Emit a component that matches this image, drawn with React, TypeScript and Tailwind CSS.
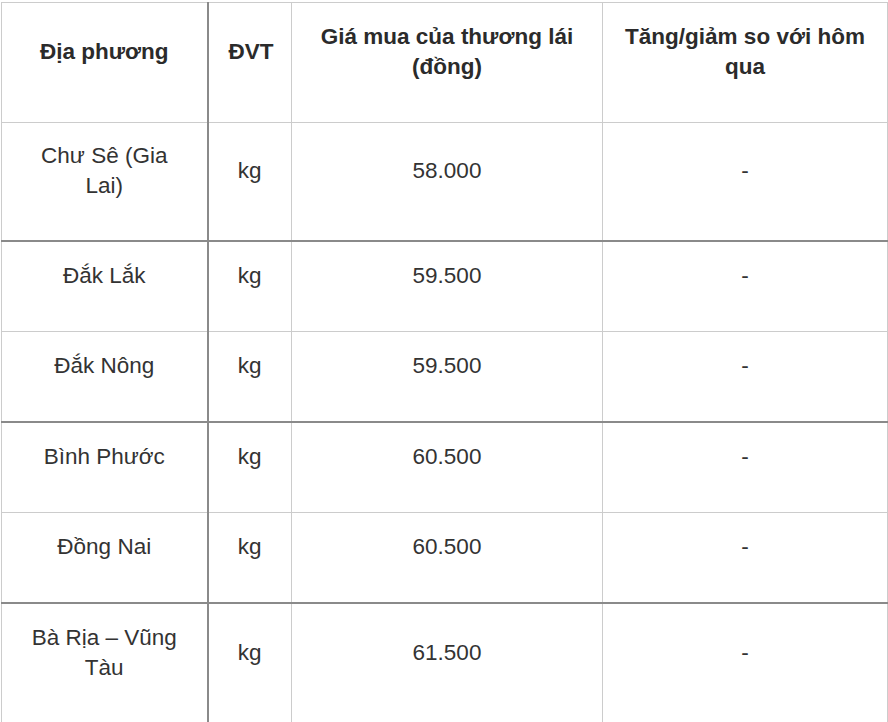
type Row = {
  place: string;
  unit: string;
  price: string;
  change: string;
  /** Darker divider under this row. */
  strong?: boolean;
};

const rows: Row[] = [
  { place: 'Chư Sê (Gia Lai)', unit: 'kg', price: '58.000', change: '-', strong: true },
  { place: 'Đắk Lắk', unit: 'kg', price: '59.500', change: '-' },
  { place: 'Đắk Nông', unit: 'kg', price: '59.500', change: '-', strong: true },
  { place: 'Bình Phước', unit: 'kg', price: '60.500', change: '-' },
  { place: 'Đồng Nai', unit: 'kg', price: '60.500', change: '-', strong: true },
  { place: 'Bà Rịa – Vũng Tàu', unit: 'kg', price: '61.500', change: '-' },
];

const base =
  'border border-[#cccccc] px-[20px] text-center align-middle leading-[30px]';

export default function App() {
  return (
    <div
      className="min-h-screen bg-white pl-[1px] pt-[2px] text-[#333333]"
      style={{ fontFamily: '"Liberation Sans", Arial, sans-serif' }}
    >
      <table className="w-[886px] table-fixed border-collapse text-[22.5px]">
        <colgroup>
          <col className="w-[206px]" />
          <col className="w-[84px]" />
          <col className="w-[311px]" />
          <col className="w-[285px]" />
        </colgroup>
        <thead>
          <tr className="font-bold text-[#2b2b2b]">
            <th className={`${base} pt-[19px] pb-[40px] border-r-2 border-r-[#8a8a8a]`}>Địa phương</th>
            <th className={`${base} pt-[19px] pb-[40px]`}>ĐVT</th>
            <th className={`${base} pt-[19px] pb-[40px]`}>Giá mua của thương lái (đồng)</th>
            <th className={`${base} pt-[19px] pb-[40px]`}>Tăng/giảm so với hôm qua</th>
          </tr>
        </thead>
        <tbody>
          {rows.map((r, i) => {
            const bottom = r.strong ? 'border-b-2 border-b-[#8a8a8a]' : '';
            const pad = i === 0 ? 'pt-[18px] pb-[39px]' : 'pt-[19px] pb-[40px]';
            const cell = `${base} ${pad} ${bottom}`;
            return (
              <tr key={r.place}>
                <td className={`${cell} border-r-2 border-r-[#8a8a8a]`}>{r.place}</td>
                <td className={cell}>{r.unit}</td>
                <td className={cell}>{r.price}</td>
                <td className={cell}>{r.change}</td>
              </tr>
            );
          })}
        </tbody>
      </table>
    </div>
  );
}
